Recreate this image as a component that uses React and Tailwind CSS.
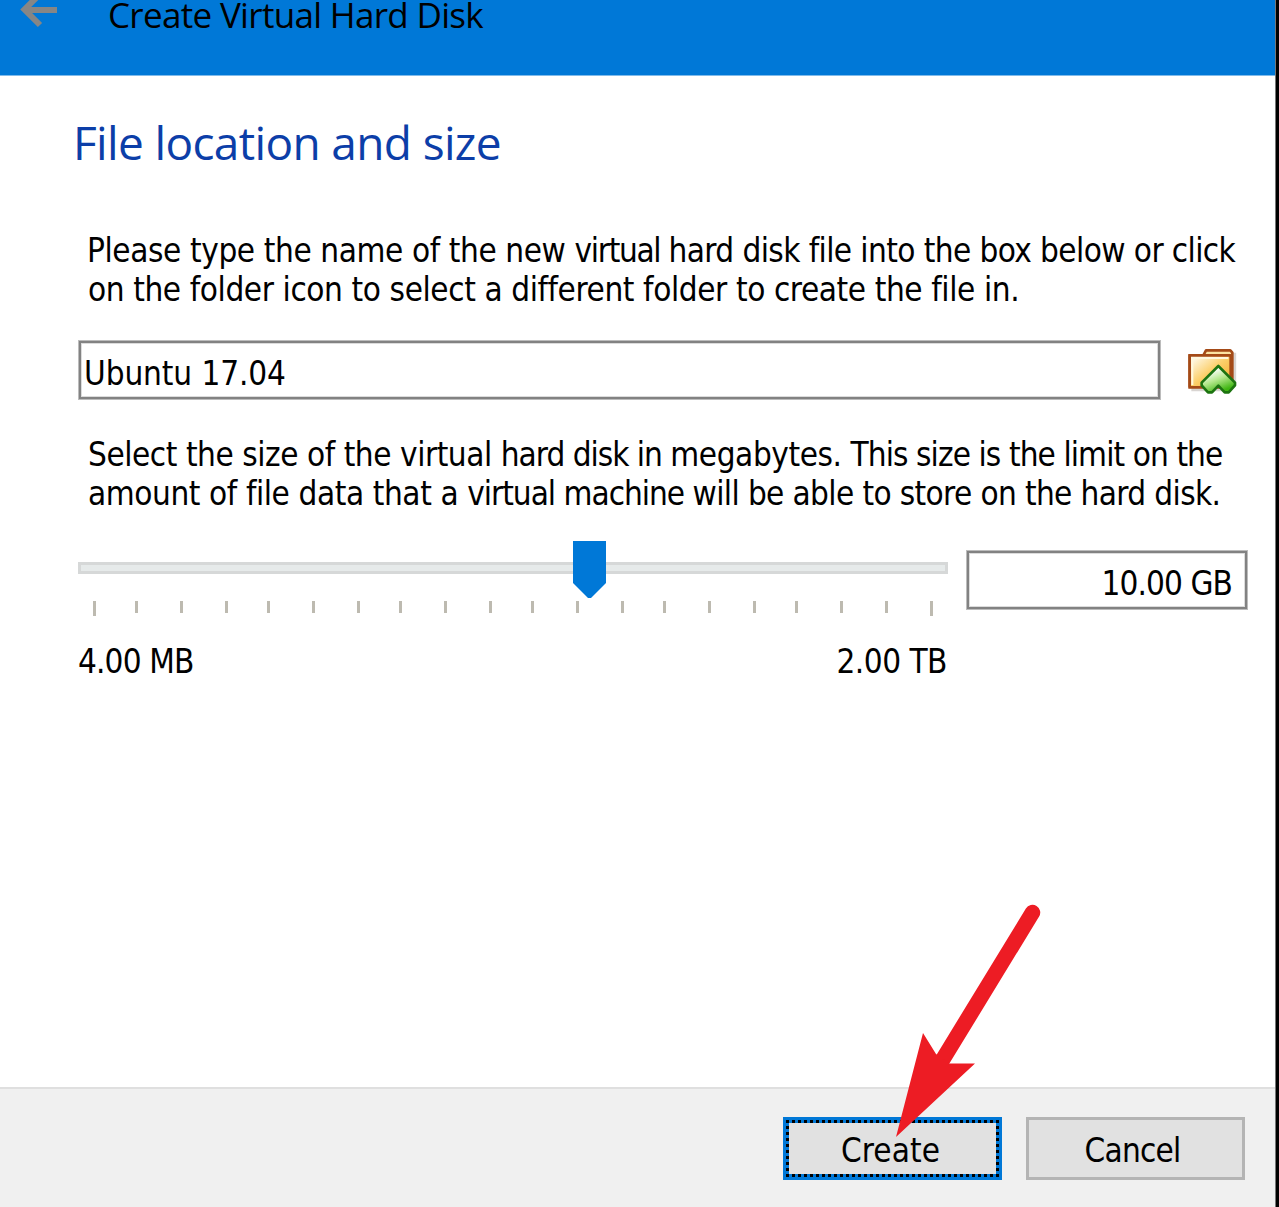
const STEPS = [42, 45, 45, 42, 45, 45, 42, 45, 45, 42, 45, 45, 42, 45, 45, 42, 45, 45, 45, 3];

const FIELD =
  "bg-white shadow-[inset_0_0_0_1px_#bcbcbc,inset_0_0_0_3px_#828282,inset_0_0_0_4px_#dcdcdc]";

function BackArrow() {
  return (
    <svg className="absolute left-[18px] -top-[8px]" width="42" height="36" viewBox="0 0 42 36" fill="none" stroke="#868686" strokeWidth="6">
      <path d="M39 18H7M22 2L6.500 17.500L22 33" />
    </svg>
  );
}

function FolderIcon() {
  return (
    <svg width="50" height="47" viewBox="141 84 150 141">
      <defs>
        <linearGradient id="folder" x1="0" y1="0" x2="1" y2="1">
          <stop offset="0.05" stopColor="#fffdf4" />
          <stop offset="0.5" stopColor="#fccf6a" />
          <stop offset="1" stopColor="#f5a623" />
        </linearGradient>
        <linearGradient id="chevron" x1="0" y1="0" x2="0.5" y2="1">
          <stop offset="0.25" stopColor="#ffffff" />
          <stop offset="0.6" stopColor="#b4e88c" />
          <stop offset="1" stopColor="#3fb512" />
        </linearGradient>
      </defs>
      <path d="M154 209H270M284 98V190" stroke="#d9d5d2" strokeWidth="9" fill="none" />
      <path d="M190 106L198 91H271L277 98V200H149V106Z" fill="#fbe3a2" stroke="#a44a17" strokeWidth="8" strokeLinejoin="round" />
      <path d="M149 106H272V202H149Z" fill="url(#folder)" stroke="#a44a17" strokeWidth="8" />
      <path d="M157 195V114H265" fill="none" stroke="#fff8df" strokeWidth="6" />
      <path d="M235 138L285 188V196L266 217H254L235 197L216 217H204L185 196V188Z" fill="url(#chevron)" stroke="#1d7410" strokeWidth="8" strokeLinejoin="round" />
    </svg>
  );
}

function Slider() {
  return (
    <div className="relative h-[75px] w-[870px]">
      <div className="pt-[21px]">
        <div className="h-[12px] border-[3px] border-[#d6d8d8] bg-[#e6eaea]" />
      </div>
      <div className="mt-[27px] ml-[15px] flex items-start">
        {STEPS.map((width, i) => (
          <div key={i} className="shrink-0" style={{ width }}>
            <div
              className={
                i === 0 || i === STEPS.length - 1
                  ? "h-[15px] w-[3px] bg-[#bdbab0]"
                  : "h-[12px] w-[3px] bg-[#bdbab0]"
              }
            />
          </div>
        ))}
      </div>
      <svg className="absolute top-0 left-[495px]" width="33" height="58" viewBox="0 0 33 58">
        <path d="M0 0H33V42L18 57H15L0 42Z" fill="#0078d7" />
      </svg>
    </div>
  );
}

function Pointer() {
  return (
    <svg className="pointer-events-none absolute top-[900px] left-[890px]" width="160" height="245" viewBox="890 900 160 245">
      <path d="M1032.500 912.500L940 1064" stroke="#ed1c24" strokeWidth="15.5" strokeLinecap="round" />
      <path d="M896 1137L923 1033L936 1054L949 1063.500H975Z" fill="#ed1c24" />
    </svg>
  );
}

export default function App() {
  return (
    <div className="relative flex h-[1207px] w-[1279px] overflow-hidden bg-white font-['DejaVu_Sans_Condensed','DejaVu_Sans',sans-serif] text-[33px] leading-[39px] whitespace-nowrap text-black">
      <div className="flex min-w-0 flex-1 flex-col">
        <header className="relative h-[76px] shrink-0 border-b border-[#80bbeb] bg-[#0078d7]">
          <BackArrow />
          <h1 className="ml-[108px] font-['Open_Sans',sans-serif] text-[35px] leading-[30px] tracking-[-0.68px]">
            Create Virtual Hard Disk
          </h1>
        </header>

        <main className="flex flex-1 flex-col pl-[78px]">
          <h2 className="mt-[35px] -ml-[5px] font-['Open_Sans',sans-serif] text-[46px] leading-[63px] tracking-[-0.65px] text-[#0c3ea8]">
            File location and size
          </h2>
          <div className="mt-[57px] ml-[10px]">
            <p className="-ml-px tracking-[-0.59px]">
              <span className="tracking-[-0.4px]">Please type the name of the new </span>
              <span className="tracking-[-1.3px]">virtual </span>
              hard disk file into the box below or click
            </p>
            <p className="tracking-[-0.4px]">
              on the folder icon to select a different folder to create the file in.
            </p>
          </div>
          <div className="mt-[31px] flex items-start">
            <div className={`${FIELD} h-[60px] w-[1083px] pt-[14px] pl-[6px] tracking-[-0.1px]`}>
              Ubuntu 17.04
            </div>
            <div className="mt-[8px] ml-[26px]">
              <FolderIcon />
            </div>
          </div>
          <div className="mt-[35px] ml-[10px]">
            <p className="tracking-[-0.91px]">
              <span className="tracking-[-0.45px]">Select the size of the virtual </span>
              <span className="tracking-[-1px]">hard disk in </span>
              <span className="tracking-[-0.43px]">megabytes. </span>
              This size is the limit on the
            </p>
            <p className="tracking-[-0.63px]">
              <span className="tracking-[-0.41px]">amount of file data that a </span>
              <span className="tracking-[-1px]">virtual machine </span>
              will be able to store on the hard disk.
            </p>
          </div>
          <div className="mt-[28px] flex items-start">
            <div className="w-[870px]">
              <Slider />
              <div className="mt-[26px] flex justify-between">
                <span className="tracking-[-0.85px]">4.00 MB</span>
                <span className="pr-px tracking-[-0.5px]">2.00 TB</span>
              </div>
            </div>
            <div className={`${FIELD} mt-[9px] ml-[18px] h-[60px] w-[282px] pt-[14px] pr-[16px] text-right tracking-[-0.9px]`}>
              10.00 GB
            </div>
          </div>
        </main>

        <footer className="flex h-[120px] shrink-0 items-start justify-end gap-[24px] border-t-2 border-[#dfdfdf] bg-[#f0f0f0] pt-[28px] pr-[30px]">
          <button className="h-[63px] w-[219px] bg-[#0078d7] p-[3px]">
            <span className="block h-full border-[3px] border-dotted border-black bg-[#e1e1e1] bg-clip-padding pt-[8px] pr-[4px] tracking-[0.1px]">
              Create
            </span>
          </button>
          <button className="h-[63px] w-[219px] border-[3px] border-[#b4b4b4] bg-[#e1e1e1] pt-[3px] pr-[6px] tracking-[-0.8px]">
            Cancel
          </button>
        </footer>
      </div>
      <div className="w-[4px] border-l border-[#777777] bg-black" />
      <Pointer />
    </div>
  );
}
